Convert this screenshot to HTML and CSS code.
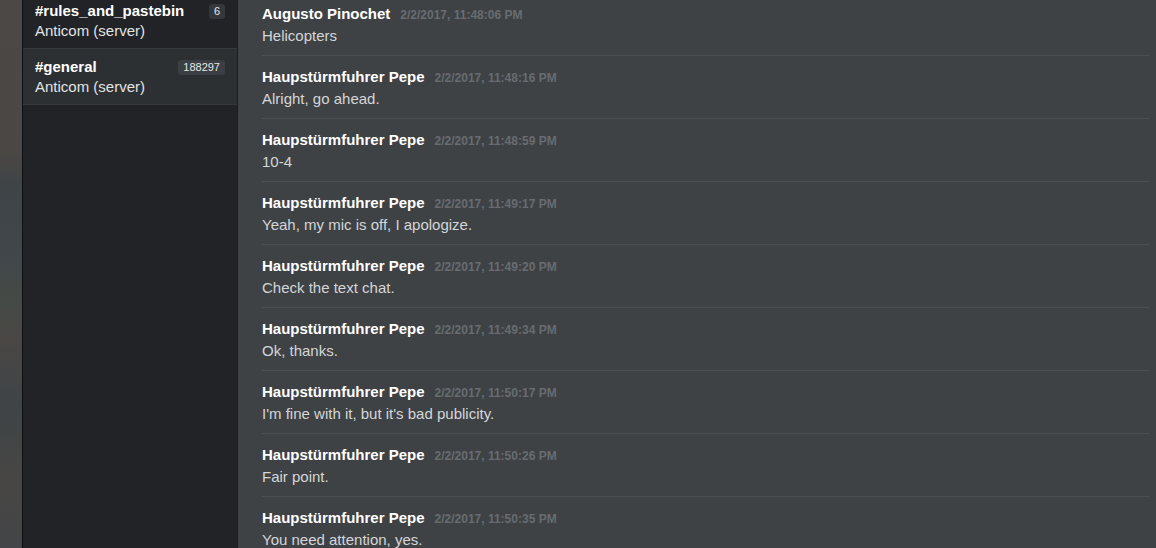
FILE: index.html
```html
<!DOCTYPE html>
<html lang="en">
<head>
    <meta charset="UTF-8">
    <meta name="viewport" content="width=device-width, initial-scale=1.0">
    <title>Anticom - #general</title>
    <link rel="stylesheet" href="styles.css">
</head>
<body>
    <div class="desktop"></div>

    <div class="sidebar">
        <div class="channels">
            <div class="channel">
                <div class="channel-top">
                    <span class="channel-name">#rules_and_pastebin</span>
                    <span class="badge">6</span>
                </div>
                <div class="server">Anticom (server)</div>
            </div>
            <div class="channel active">
                <div class="channel-top">
                    <span class="channel-name">#general</span>
                    <span class="badge">188297</span>
                </div>
                <div class="server">Anticom (server)</div>
            </div>
        </div>
    </div>

    <div class="chat">
        <div class="messages">
            <div class="message">
                <div class="meta"><span class="author">Augusto Pinochet</span><span class="time">2/2/2017, 11:48:06 PM</span></div>
                <div class="text">Helicopters</div>
            </div>
            <div class="message">
                <div class="meta"><span class="author">Haupstürmfuhrer Pepe</span><span class="time">2/2/2017, 11:48:16 PM</span></div>
                <div class="text">Alright, go ahead.</div>
            </div>
            <div class="message">
                <div class="meta"><span class="author">Haupstürmfuhrer Pepe</span><span class="time">2/2/2017, 11:48:59 PM</span></div>
                <div class="text">10-4</div>
            </div>
            <div class="message">
                <div class="meta"><span class="author">Haupstürmfuhrer Pepe</span><span class="time">2/2/2017, 11:49:17 PM</span></div>
                <div class="text">Yeah, my mic is off, I apologize.</div>
            </div>
            <div class="message">
                <div class="meta"><span class="author">Haupstürmfuhrer Pepe</span><span class="time">2/2/2017, 11:49:20 PM</span></div>
                <div class="text">Check the text chat.</div>
            </div>
            <div class="message">
                <div class="meta"><span class="author">Haupstürmfuhrer Pepe</span><span class="time">2/2/2017, 11:49:34 PM</span></div>
                <div class="text">Ok, thanks.</div>
            </div>
            <div class="message">
                <div class="meta"><span class="author">Haupstürmfuhrer Pepe</span><span class="time">2/2/2017, 11:50:17 PM</span></div>
                <div class="text">I'm fine with it, but it's bad publicity.</div>
            </div>
            <div class="message">
                <div class="meta"><span class="author">Haupstürmfuhrer Pepe</span><span class="time">2/2/2017, 11:50:26 PM</span></div>
                <div class="text">Fair point.</div>
            </div>
            <div class="message">
                <div class="meta"><span class="author">Haupstürmfuhrer Pepe</span><span class="time">2/2/2017, 11:50:35 PM</span></div>
                <div class="text">You need attention, yes.</div>
            </div>
        </div>
    </div>
</body>
</html>
```

FILE: styles.css
```css
html, body {
    height: 100%;
}

body {
    margin: 0;
    padding: 0;
    display: flex;
    overflow: hidden;
    font-family: "Liberation Sans", Arial, sans-serif;
    font-size: 15px;
    background-color: #3e4245;
}

.desktop {
    width: 22px;
    flex-shrink: 0;
    background: linear-gradient(to bottom, #4b4845 0%, #4a4744 28%, #3f4447 34%, #42474b 48%, #454a45 55%, #4a4745 62%, #3f4447 74%, #474644 88%, #444548 100%);
    border-right: 1px solid #0e0f10;
}

.sidebar {
    width: 214px;
    flex-shrink: 0;
    background-color: #212327;
    border-right: 1px solid #1b1c1f;
    overflow: hidden;
}

.channels {
    margin-top: -7px;
}

.channel {
    padding: 8px 12px 7px 12px;
    border-bottom: 1px solid #36393c;
    line-height: 20px;
}

.channel.active {
    background-color: #2d3033;
}

.channel-top {
    display: flex;
    justify-content: space-between;
    align-items: center;
    height: 20px;
}

.channel-name {
    font-weight: bold;
    color: #ffffff;
}

.server {
    color: #e2e3e4;
}

.badge {
    font-size: 11px;
    line-height: 15px;
    padding: 0 5px;
    border-radius: 3px;
    color: #e6e7e8;
    background-color: #34373b;
}

.channel.active .badge {
    background-color: #3b3e42;
}

.chat {
    flex: 1;
    overflow: hidden;
    padding-left: 24px;
    padding-right: 7px;
}

.messages {
    margin-top: -7px;
}

.message {
    padding: 10px 0 8px 0;
    border-bottom: 1px solid #4b4f52;
    line-height: 22px;
}

.meta {
    display: flex;
    align-items: baseline;
    gap: 10px;
    height: 22px;
}

.author {
    font-weight: bold;
    color: #ffffff;
}

.time {
    font-size: 12px;
    font-weight: bold;
    color: #686c70;
}

.text {
    color: #d4d6d8;
    height: 22px;
}
```
